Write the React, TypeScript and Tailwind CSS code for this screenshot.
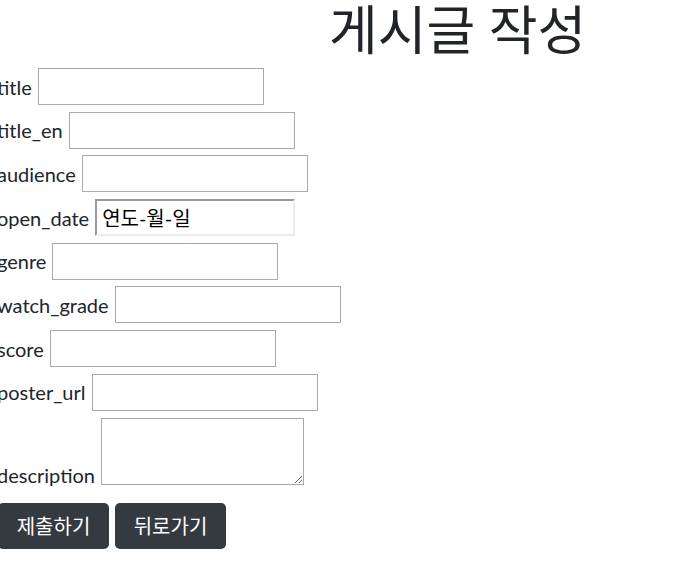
const fields = [
  'title',
  'title_en',
  'audience',
  'open_date',
  'genre',
  'watch_grade',
  'score',
  'poster_url',
]

export default function App() {
  return (
    <div className="min-h-screen bg-white text-[#212529] font-['Lato','Noto_Sans_CJK_KR',sans-serif] text-[20px] leading-[1.5]">
      {/* Heading */}
      <h1 className="pl-[329px] text-[53px] leading-[60px] font-normal">게시글 작성</h1>

      <form className="-ml-[3px] mt-[8px] flex flex-col gap-[6.7px]" onSubmit={(e) => e.preventDefault()}>
        {fields.map((name) => (
          <div key={name} className="flex items-center gap-[6px] h-[37px]">
            <label htmlFor={name}>{name}</label>
            {name === 'open_date' ? (
              <div
                id={name}
                className="w-[200px] h-[37px] flex items-center pl-[5px] border-2 border-t-[#9a9a9a] border-l-[#9a9a9a] border-r-[#ececec] border-b-[#ececec] text-black"
              >
                연도-월-일
              </div>
            ) : (
              <input id={name} type="text" className="w-[226px] h-[37px] border border-[#a9a9a9] bg-white outline-none px-[2px]" />
            )}
          </div>
        ))}

        <div className="flex items-end gap-[6px]">
          <label htmlFor="description" className="leading-[24px] translate-y-[2px]">description</label>
          <textarea id="description" className="w-[203px] h-[67px] border border-[#a9a9a9] resize-y block" />
        </div>

        <div className="flex gap-[6px] mt-[12px] ml-[1px]">
          <button type="submit" className="h-[46px] w-[111px] rounded-[5px] bg-[#343a40] text-white">
            제출하기
          </button>
          <button type="button" className="h-[46px] w-[111px] rounded-[5px] bg-[#343a40] text-white">
            뒤로가기
          </button>
        </div>
      </form>
    </div>
  )
}
